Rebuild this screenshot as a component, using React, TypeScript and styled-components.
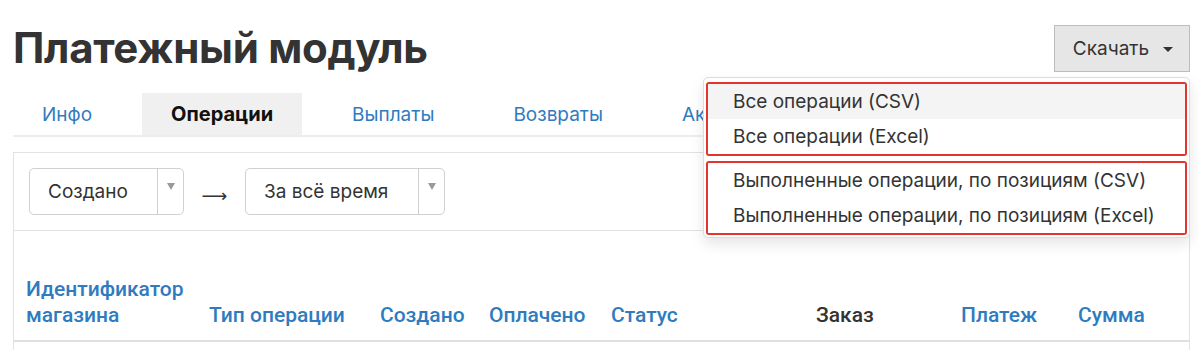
import React from "react";
import styled, { createGlobalStyle } from "styled-components";

const Global = createGlobalStyle`
  html, body { margin: 0; padding: 0; background: #fff; }
  body { font-family: Inter, "Noto Sans", sans-serif; color: #333; }
  * { box-sizing: border-box; }
`;

const Page = styled.div`
  position: relative;
  width: 1199px;
  height: 350px;
  overflow: hidden;
  padding: 0 9px 0 13px;
`;

const TitleRow = styled.div`
  display: flex;
  justify-content: space-between;
  align-items: flex-start;
  height: 93px;
`;

const Title = styled.h1`
  margin: 0;
  padding-top: 23px;
  font-size: 42px;
  line-height: 50px;
  font-weight: 700;
  color: #333;
  letter-spacing: -0.3px;
`;

const DownloadButton = styled.button`
  margin-top: 25px;
  height: 47px;
  width: 136px;
  display: flex;
  align-items: center;
  justify-content: center;
  gap: 14px;
  padding: 0 8px 0 10px;
  background: #e6e6e6;
  border: 1px solid #bdbdbd;
  font-family: Inter, sans-serif;
  font-size: 19px;
  color: #333;
`;

const Caret = styled.span`
  width: 0;
  height: 0;
  border-left: 5px solid transparent;
  border-right: 5px solid transparent;
  border-top: 5px solid #333;
  margin-top: 2px;
`;

const Tabs = styled.div`
  display: flex;
  height: 44px;
  border-bottom: 2px solid #ededed;
`;

const Tab = styled.div<{ $active?: boolean }>`
  padding: 0 29px;
  margin-right: 21px;
  display: flex;
  align-items: center;
  font-size: ${(p) => (p.$active ? 20 : 19)}px;
  font-weight: ${(p) => (p.$active ? 700 : 400)};
  color: ${(p) => (p.$active ? "#111" : "#2f7bc0")};
  background: ${(p) => (p.$active ? "#f0f0f0" : "transparent")};
  white-space: nowrap;
`;

const Panel = styled.div`
  margin-top: 15px;
  border: 1px solid #e2e2e2;
  border-bottom: none;
  height: 200px;
`;

const FilterRow = styled.div`
  display: flex;
  align-items: center;
  padding: 15px 15px;
  border-bottom: 1px solid #e2e2e2;
`;

const Select = styled.div<{ $w: number }>`
  width: ${(p) => p.$w}px;
  height: 47px;
  border: 1px solid #d0d0d0;
  border-radius: 5px;
  display: flex;
  align-items: stretch;
  font-size: 19px;
  color: #333;
`;

const SelectLabel = styled.div`
  flex: 1;
  display: flex;
  align-items: center;
  padding-left: 18px;
`;

const SelectArrow = styled.div`
  width: 26px;
  border-left: 1px solid #d0d0d0;
  display: flex;
  align-items: center;
  justify-content: center;
  &::after {
    content: "";
    border-left: 4px solid transparent;
    border-right: 4px solid transparent;
    border-top: 7px solid #9a9a9a;
    margin-top: -10px;
  }
`;

const Arrow = styled.div`
  width: 61px;
  text-align: center;
  font-family: "DejaVu Sans", sans-serif;
  font-size: 18px;
  color: #333;
  padding-top: 8px;
`;

const HeaderRow = styled.div`
  display: grid;
  grid-template-columns: 183px 171px 109px 122px 205px 145px 117px 1fr;
  align-items: end;
  padding: 45px 0 12px 12px;
  border-bottom: 2px solid #e0e0e0;
`;

const Th = styled.div<{ $plain?: boolean }>`
  font-family: Roboto, Inter, sans-serif;
  font-weight: 500;
  font-size: 21px;
  line-height: 26px;
  color: ${(p) => (p.$plain ? "#333" : "#2f7bc0")};
  white-space: nowrap;
`;

const Menu = styled.div`
  position: absolute;
  left: 703px;
  top: 77px;
  width: 487px;
  background: #fff;
  border: 1px solid #dcdcdc;
  border-radius: 5px;
  box-shadow: 0 6px 14px rgba(0, 0, 0, 0.1);
  padding: 4px 2px 2px;
  display: flex;
  flex-direction: column;
  gap: 5px;
`;

const Group = styled.div`
  border: 2px solid #e3342f;
  border-radius: 3px;
  overflow: hidden;
`;

const Item = styled.div<{ $hover?: boolean }>`
  height: 35px;
  display: flex;
  align-items: center;
  padding-left: 25px;
  font-size: 19px;
  color: #333;
  background: ${(p) => (p.$hover ? "#f4f4f4" : "#fff")};
  white-space: nowrap;
`;

export default function App() {
  return (
    <>
      <Global />
      <Page>
        <TitleRow>
          <Title>Платежный модуль</Title>
          <DownloadButton>
            Скачать <Caret />
          </DownloadButton>
        </TitleRow>
        <Tabs>
          <Tab>Инфо</Tab>
          <Tab $active>Операции</Tab>
          <Tab>Выплаты</Tab>
          <Tab>Возвраты</Tab>
          <Tab>Акты</Tab>
        </Tabs>
        <Panel>
          <FilterRow>
            <Select $w={155}>
              <SelectLabel>Создано</SelectLabel>
              <SelectArrow />
            </Select>
            <Arrow>⟶</Arrow>
            <Select $w={200}>
              <SelectLabel>За всё время</SelectLabel>
              <SelectArrow />
            </Select>
          </FilterRow>
          <HeaderRow>
            <Th>
              Идентификатор
              <br />
              магазина
            </Th>
            <Th>Тип операции</Th>
            <Th>Создано</Th>
            <Th>Оплачено</Th>
            <Th>Статус</Th>
            <Th $plain>Заказ</Th>
            <Th>Платеж</Th>
            <Th>Сумма</Th>
          </HeaderRow>
        </Panel>
        <Menu>
          <Group>
            <Item $hover>Все операции (CSV)</Item>
            <Item>Все операции (Excel)</Item>
          </Group>
          <Group>
            <Item>Выполненные операции, по позициям (CSV)</Item>
            <Item>Выполненные операции, по позициям (Excel)</Item>
          </Group>
        </Menu>
      </Page>
    </>
  );
}
